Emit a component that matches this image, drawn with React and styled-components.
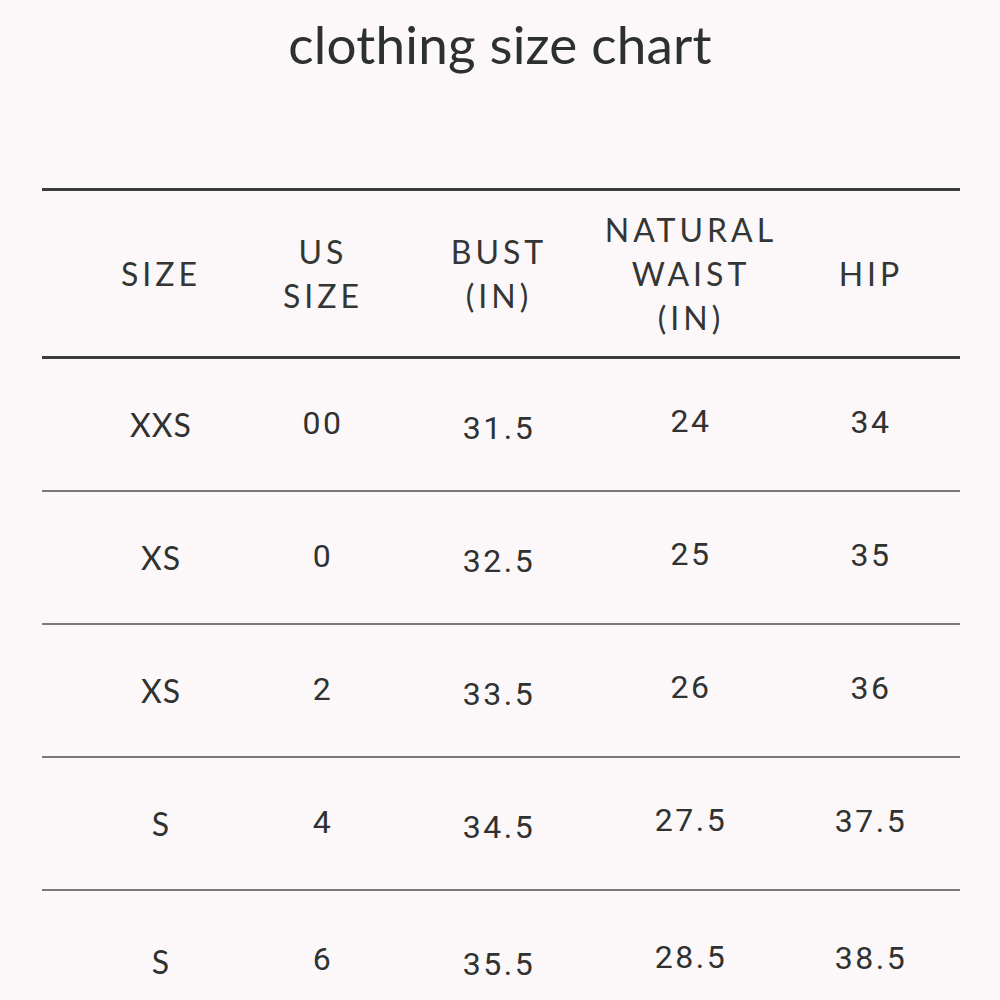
import React from 'react';
import styled, { createGlobalStyle } from 'styled-components';

const GlobalStyle = createGlobalStyle`
  html, body {
    margin: 0;
    padding: 0;
    background: #fcf8f9;
  }
`;

const Page = styled.div`
  width: 1000px;
  height: 1000px;
  overflow: hidden;
  background: #fcf8f9;
  color: #2f3231;
  font-family: 'Lato', 'Liberation Sans', sans-serif;
`;

const Title = styled.h1`
  margin: 0;
  padding-top: 10px;
  height: 178px;
  text-align: center;
  font-size: 53px;
  font-weight: 400;
  line-height: 68px;
  letter-spacing: 0.2px;
  color: #2c302e;
`;

const Table = styled.div`
  margin: 0 40px 0 42px;
  border-top: 3px solid #3b3d3c;
`;

const Row = styled.div`
  display: grid;
  grid-template-columns: 162px 162px 190px 194px 166px;
  padding-left: 38px;
  align-items: center;
  justify-items: center;
  height: ${(p) => p.$height}px;
  border-bottom: ${(p) => (p.$head ? '3px solid #3b3d3c' : '2px solid #7a7a7a')};
`;

const HeadCell = styled.div`
  text-align: center;
  font-size: 32px;
  line-height: 44px;
  letter-spacing: 4px;
  text-transform: uppercase;
  color: #333634;
`;

const Cell = styled.div`
  text-align: center;
  font-family: ${(p) => (p.$num ? "'Roboto', 'DejaVu Sans', sans-serif" : "'Lato', 'Liberation Sans', sans-serif")};
  font-size: 32px;
  letter-spacing: ${(p) => (p.$num ? 2.5 : 1)}px;
  color: #2f3231;
  margin-top: ${(p) => p.$shift || 0}px;
`;

const rows = [
  ['XXS', '00', '31.5', '24', '34'],
  ['XS', '0', '32.5', '25', '35'],
  ['XS', '2', '33.5', '26', '36'],
  ['S', '4', '34.5', '27.5', '37.5'],
  ['S', '6', '35.5', '28.5', '38.5'],
];

// the scan has the columns sitting at slightly different heights
const shifts = [0, -4, 6, -8, -6];

export default function App() {
  return (
    <Page>
      <GlobalStyle />
      <Title>clothing size chart</Title>
      <Table>
        <Row $head $height={165}>
          <HeadCell>size</HeadCell>
          <HeadCell>us<br />size</HeadCell>
          <HeadCell>bust<br />(in)</HeadCell>
          <HeadCell>natural<br />waist<br />(in)</HeadCell>
          <HeadCell>hip</HeadCell>
        </Row>
        {rows.map((r, i) => (
          <Row key={i} $height={i === rows.length - 1 ? 140 : 131}>
            {r.map((v, j) => (
              <Cell key={j} $num={j > 0} $shift={shifts[j]}>
                {v}
              </Cell>
            ))}
          </Row>
        ))}
      </Table>
    </Page>
  );
}
